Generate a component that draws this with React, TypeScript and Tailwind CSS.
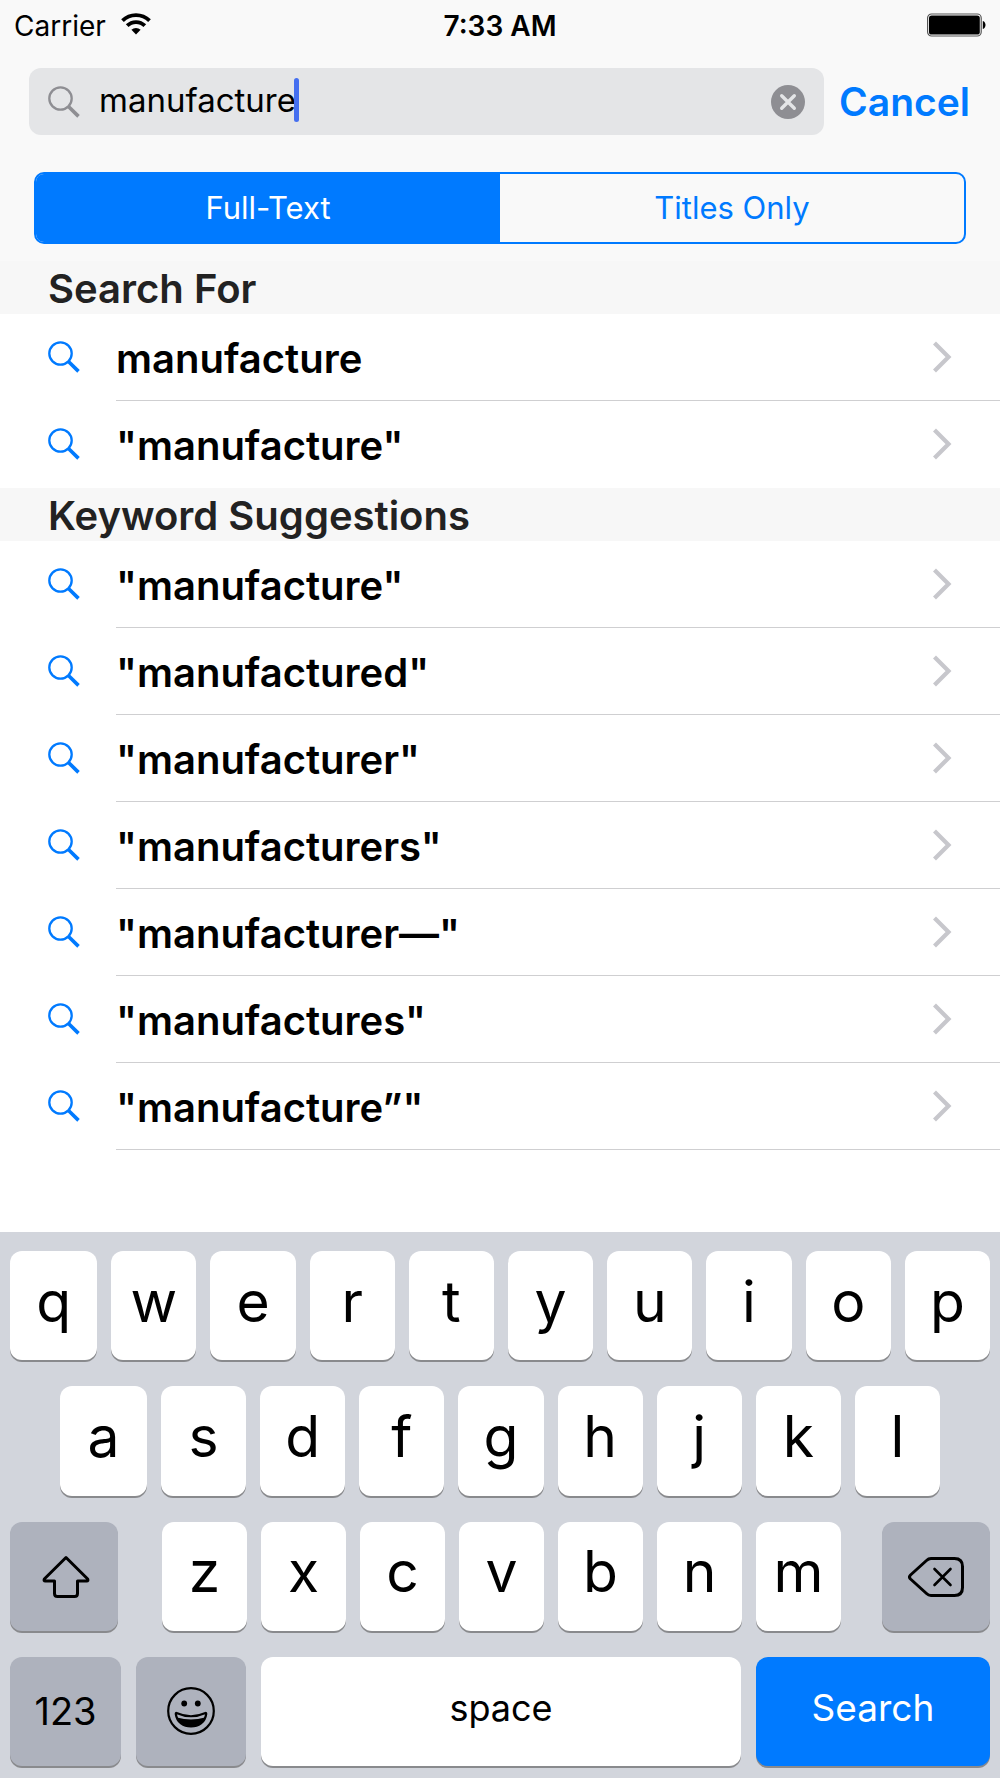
import { useState } from "react";

const searchFor = ["manufacture", '"manufacture"'];

const suggestions = [
  '"manufacture"',
  '"manufactured"',
  '"manufacturer"',
  '"manufacturers"',
  '"manufacturer—"',
  '"manufactures"',
  '"manufacture”"',
];

function SearchIcon({ className }: { className: string }) {
  return (
    <svg viewBox="0 0 32 32" className={className} fill="none" stroke="currentColor" aria-hidden="true">
      <circle cx="12.5" cy="12.5" r="11.2" strokeWidth="2.3" />
      <path d="M20.2 20.2 30.5 30.4" strokeWidth="3.6" />
    </svg>
  );
}

function ResultRow({ text, divider }: { text: string; divider: boolean }) {
  return (
    <li>
      <button type="button" className="flex h-[87px] w-full items-center pl-12 text-left">
        <SearchIcon className="mb-0.5 h-8 w-8 shrink-0 text-[#007aff]" />
        <span
          className={`ml-9 flex h-full flex-1 items-center justify-between border-b pr-12 ${
            divider ? "border-[#cfcfd1]" : "border-transparent"
          }`}
        >
          <span className="pt-[3px] text-[40px] leading-[48px] font-semibold text-black">{text}</span>
          <svg viewBox="0 0 20 32" className="h-8 w-5 text-[#c7c7cc]" fill="none" stroke="currentColor" aria-hidden="true">
            <path d="M2.5 2 16.5 16 2.5 30" strokeWidth="4.2" />
          </svg>
        </span>
      </button>
    </li>
  );
}

function Section({ title, items, lastDivider }: { title: string; items: string[]; lastDivider: boolean }) {
  return (
    <section>
      <h2 className="flex h-[53px] items-center bg-[#f7f7f7] pt-[3px] pl-12 text-[40px] leading-[48px] font-semibold text-[#222]">
        {title}
      </h2>
      <ul>
        {items.map((item, i) => (
          <ResultRow key={item} text={item} divider={lastDivider || i < items.length - 1} />
        ))}
      </ul>
    </section>
  );
}

const keyBase = "flex items-center justify-center rounded-xl shadow-[0_2px_0_#898a8d]";

function LetterKeys({ letters, onPress }: { letters: string; onPress: (c: string) => void }) {
  return (
    <>
      {letters.split("").map((c) => (
        <button
          key={c}
          type="button"
          onClick={() => onPress(c)}
          className={`${keyBase} min-w-0 flex-[85] bg-white pb-2 text-[57px] leading-[64px] text-black`}
        >
          {c}
        </button>
      ))}
    </>
  );
}

export default function App() {
  const [query, setQuery] = useState("manufacture");
  const [scope, setScope] = useState("full");

  const press = (c: string) => setQuery((q) => q + c);

  return (
    <div className="flex min-h-screen flex-col bg-white font-['Inter',sans-serif]">
      <header className="bg-[#f9f9f9]">
        <div className="grid h-[50px] grid-cols-3 items-center px-[14px] pt-0.5 text-[28px] leading-8 text-black">
          <div className="flex items-center gap-[15px]">
            <span>Carrier</span>
            <svg viewBox="0 0 30 22" className="mb-1 h-[22px] w-[30px]" fill="none" stroke="#000" strokeWidth="3.8" aria-hidden="true">
              <path d="M1.5 7.6a19.2 19.2 0 0 1 27 0" />
              <path d="M6.2 12.7a12.4 12.4 0 0 1 17.6 0" />
              <path d="M15 21.4 10.4 16.8a6.6 6.6 0 0 1 9.2 0Z" fill="#000" stroke="none" />
            </svg>
          </div>
          <span className="text-center font-semibold">7:33 AM</span>
          <svg viewBox="0 0 60 24" className="mb-0.5 h-6 w-[60px] justify-self-end" aria-hidden="true">
            <rect x="1.6" y="1" width="53.6" height="22" rx="4" fill="#fff" stroke="#555" strokeWidth="1.2" />
            <rect x="3" y="2.4" width="50.8" height="19.2" rx="2.6" fill="#000" />
            <path d="M56.8 8c3.6 1 3.6 7 0 8Z" fill="#000" />
          </svg>
        </div>

        <div className="flex items-center gap-[15px] pt-[18px] pr-[30px] pl-[29px]">
          <label className="flex h-[67px] min-w-0 flex-1 items-center rounded-xl bg-[#e4e5e7] px-[19px]">
            <SearchIcon className="h-8 w-8 shrink-0 text-[#8e8e93]" />
            <input
              type="text"
              aria-label="Search"
              value={query}
              onChange={(e) => setQuery(e.target.value)}
              className="mb-1 ml-[19px] field-sizing-content min-w-0 bg-transparent text-[33px] leading-10 text-black caret-transparent outline-none"
            />
            <span className="mb-1 -ml-0.5 h-11 w-[5px] shrink-0 rounded-full bg-[#456ff0]" />
            <button type="button" aria-label="Clear" onClick={() => setQuery("")} className="ml-auto">
              <svg viewBox="0 0 34 34" className="h-[34px] w-[34px]" aria-hidden="true">
                <circle cx="17" cy="17" r="17" fill="#8e8e93" />
                <path d="m10.7 10.7 12.6 12.6m0-12.6L10.7 23.3" stroke="#e4e5e7" strokeWidth="3.4" strokeLinecap="round" />
              </svg>
            </button>
          </label>
          <button type="button" className="text-[39px] leading-[48px] font-semibold text-[#007aff]">
            Cancel
          </button>
        </div>

        <div className="px-[34px] pt-[37px] pb-[17px]">
          <div className="grid h-[72px] grid-cols-2 overflow-hidden rounded-[10px] border-2 border-[#007aff] text-[31px] leading-9">
            <button
              type="button"
              aria-pressed={scope === "full"}
              onClick={() => setScope("full")}
              className={scope === "full" ? "bg-[#007aff] text-white" : "text-[#007aff]"}
            >
              Full-Text
            </button>
            <button
              type="button"
              aria-pressed={scope === "titles"}
              onClick={() => setScope("titles")}
              className={scope === "titles" ? "bg-[#007aff] text-white" : "text-[#007aff]"}
            >
              Titles Only
            </button>
          </div>
        </div>
      </header>

      <main className="flex-1">
        <Section title="Search For" items={searchFor} lastDivider={false} />
        <Section title="Keyword Suggestions" items={suggestions} lastDivider />
      </main>

      <div className="flex h-[546px] flex-col gap-[26px] bg-[#d2d5dc] px-[10px] pt-[19px] pb-3">
        <div className="flex flex-1 gap-[14px] [&>*:first-child]:flex-[87]">
          <LetterKeys letters="qwertyuiop" onPress={press} />
        </div>
        <div className="flex flex-1 gap-[14px] px-[50px] [&>*:first-child]:flex-[87]">
          <LetterKeys letters="asdfghjkl" onPress={press} />
        </div>
        <div className="flex flex-1">
          <button type="button" aria-label="Shift" className={`${keyBase} w-[108px] bg-[#aeb2bd]`}>
            <svg viewBox="0 0 48 44" className="mt-0.5 ml-1 h-11 w-12" fill="none" stroke="#000" strokeWidth="3" strokeLinejoin="round" aria-hidden="true">
              <path d="M24 2.5 2.3 24q-.8 2 1 2h9.2v12.5q0 3 3 3h17q3 0 3-3V26h9.200q1.800 0 1-2Z" />
            </svg>
          </button>
          <div className="mr-[41px] ml-11 flex min-w-0 flex-1 gap-[14px]">
            <LetterKeys letters="zxcvbnm" onPress={press} />
          </div>
          <button
            type="button"
            aria-label="Delete"
            onClick={() => setQuery((q) => q.slice(0, -1))}
            className={`${keyBase} w-[108px] bg-[#aeb2bd]`}
          >
            <svg viewBox="0 0 56 42" className="mt-0.5 h-[42px] w-14" fill="none" stroke="#000" strokeLinecap="round" strokeLinejoin="round" aria-hidden="true">
              <path d="M23 2.5h23.5q8 0 8 8v21q0 8-8 8H23q-2.5 0-4.5-2L2.5 23q-2-2 0-4l16-14.5q2-2 4.5-2Z" strokeWidth="3" />
              <path d="m26.500 13 16 16m0-16-16 16" strokeWidth="2.6" />
            </svg>
          </button>
        </div>
        <div className="grid flex-1 grid-cols-[111fr_110fr_480fr_234fr] gap-[15px]">
          <button type="button" className={`${keyBase} bg-[#aeb2bd] text-[38px] leading-[48px] text-black`}>
            123
          </button>
          <button type="button" aria-label="Emoji" className={`${keyBase} bg-[#aeb2bd]`}>
            <svg viewBox="0 0 48 48" className="h-12 w-12" fill="none" stroke="#000" aria-hidden="true">
              <circle cx="24" cy="24" r="22.8" strokeWidth="2.2" />
              <circle cx="17.2" cy="16.5" r="2.9" fill="#000" stroke="none" />
              <circle cx="30.8" cy="16.5" r="2.9" fill="#000" stroke="none" />
              <path d="M9.5 26q14.5 6.500 29 0 .8-.2.7 1C38 35.5 31.500 39.500 24 39.500S10 35.500 8.800 27q-.1-1.200.7-1Z" strokeWidth="2.2" />
              <path d="M10 30.500q14 4 28 0C35.500 37 30 39.500 24 39.500S12.500 37 10 30.500Z" fill="#000" stroke="none" />
            </svg>
          </button>
          <button type="button" onClick={() => press(" ")} className={`${keyBase} bg-white pb-1.5 text-[36px] leading-[48px] text-black`}>
            space
          </button>
          <button type="button" className={`${keyBase} bg-[#007aff] pb-1.5 text-[37px] leading-[48px] text-white`}>
            Search
          </button>
        </div>
      </div>
    </div>
  );
}
